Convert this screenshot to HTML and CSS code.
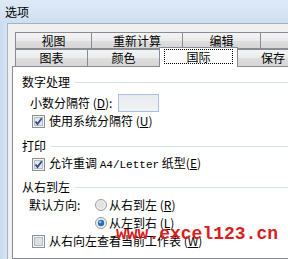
FILE: index.html
```html
<!DOCTYPE html>
<html>
<head>
<meta charset="utf-8">
<link rel="stylesheet" href="styles.css">
</head>
<body>
<div class="window">
  <div class="titlebar"><span class="title">选项</span></div>
  <div class="client">
    <div class="tabs">
      <div class="tabrow row1">
        <div class="tab w77">视图</div>
        <div class="tab w92">重新计算</div>
        <div class="tab w79">编辑</div>
        <div class="tab w80">常规</div>
      </div>
      <div class="tabrow row2">
        <div class="tab w73">图表</div>
        <div class="tab w73">颜色</div>
        <div class="tab selected w79"><span class="focus">国际</span></div>
        <div class="tab w72">保存</div>
      </div>
    </div>
    <div class="panel">
      <div class="head h1"><span>数字处理</span></div>
      <div class="row decimal">
        <span class="lbl">小数分隔符 (<u>D</u>):</span>
        <span class="input"></span>
      </div>
      <div class="row check r-sys">
        <svg class="cb" width="13" height="13" viewBox="0 0 13 13"><rect x="0.5" y="0.5" width="12" height="12" fill="#f4f4f4" stroke="#8e8f8f"/><rect x="2.5" y="2.5" width="8" height="8" fill="#e4e8ee" stroke="#b4bac2"/><path d="M3.5 6.5 L5.5 9 L9.8 3.2" fill="none" stroke="#2d4a8a" stroke-width="1.8"/></svg>
        <span>使用系统分隔符 (<u>U</u>)</span>
      </div>
      <div class="head h2"><span>打印</span></div>
      <div class="row check r-print">
        <svg class="cb" width="13" height="13" viewBox="0 0 13 13"><rect x="0.5" y="0.5" width="12" height="12" fill="#f4f4f4" stroke="#8e8f8f"/><rect x="2.5" y="2.5" width="8" height="8" fill="#e4e8ee" stroke="#b4bac2"/><path d="M3.5 6.5 L5.5 9 L9.8 3.2" fill="none" stroke="#2d4a8a" stroke-width="1.8"/></svg>
        <span>允许重调 <span class="mono">A4/Letter</span> 纸型(<u>E</u>)</span>
      </div>
      <div class="head h3"><span>从右到左</span></div>
      <div class="row dir">
        <span class="dirlbl">默认方向:</span>
        <svg class="rd" width="12" height="12" viewBox="0 0 12 12"><circle cx="6" cy="6" r="5.5" fill="#eeeeee" stroke="#9a9a9a"/><circle cx="6" cy="6" r="3.5" fill="#e2e2e2"/></svg>
        <span>从右到左 (<u>R</u>)</span>
      </div>
      <div class="row radio2">
        <svg class="rd" width="12" height="12" viewBox="0 0 12 12"><circle cx="6" cy="6" r="5.5" fill="#eeeeee" stroke="#9a9a9a"/><circle cx="6" cy="6" r="3.2" fill="#2a6fb5"/><circle cx="5.2" cy="5" r="1.3" fill="#8ec1ee"/></svg>
        <span>从左到右 (<u>L</u>)</span>
      </div>
      <div class="row check r-rtl">
        <svg class="cb" width="13" height="13" viewBox="0 0 13 13"><rect x="0.5" y="0.5" width="12" height="12" fill="#f4f4f4" stroke="#8e8f8f"/><rect x="2.5" y="2.5" width="8" height="8" fill="#dcdfe3" stroke="#b4bac2"/></svg>
        <span>从右向左查看当前工作表 (<u>W</u>)</span>
      </div>
    </div>
  </div>
</div>
<div class="watermark">www.excel123.cn</div>
</body>
</html>
```
FILE: styles.css
```css
html, body {
  margin: 0;
  padding: 0;
  width: 288px;
  height: 259px;
  overflow: hidden;
}
body {
  position: relative;
  background: linear-gradient(90deg, #c9daee 0px, #d7e4f3 7px);
  font-family: "Noto Sans CJK SC", "Noto Sans", sans-serif;
  font-size: 12px;
  color: #000;
}
.window {
  width: 420px;
  height: 259px;
  display: flex;
  flex-direction: column;
}
.titlebar {
  height: 23px;
  padding-left: 5px;
  display: flex;
  align-items: center;
  background: linear-gradient(#dfe9f6, #cfdff1);
}
.title {
  font-size: 12px;
  line-height: 14px;
  margin-top: 1px;
}
.client {
  flex: 1;
  margin-left: 7px;
  border-left: 1px solid #a6b2c2;
  border-top: 1px solid #a6b2c2;
  background: #f0f0f0;
  padding: 8px 0 0 4px;
  display: flex;
  flex-direction: column;
}
.tabs {
  padding-left: 3px;
  display: flex;
  flex-direction: column;
}
.tabrow {
  display: flex;
  height: 17px;
}
.row2 {
  position: relative;
  z-index: 2;
}
.tab {
  box-sizing: border-box;
  height: 17px;
  border: 1px solid #898c95;
  margin-left: -1px;
  background: linear-gradient(#f4f4f4, #ebebeb 50%, #dedede 51%, #d6d6d6);
  display: flex;
  align-items: center;
  justify-content: center;
  line-height: 14px;
}
.tab:first-child { margin-left: 0; }
.row2 .tab { border-bottom: none; }
.w72 { width: 72px; }
.w73 { width: 73px; }
.w77 { width: 77px; }
.w79 { width: 79px; }
.w80 { width: 80px; }
.w92 { width: 92px; }
.tab.selected {
  background: #ffffff;
  height: 20px;
  margin-top: -2px;
  align-items: flex-start;
  padding: 1px 4px 0;
}
.focus {
  flex: 1;
  box-sizing: border-box;
  height: 15px;
  border: 1px dotted #000;
  text-align: center;
  line-height: 13px;
}
.panel {
  flex: 1;
  border: 1px solid #898c95;
  background: #ffffff;
  padding-left: 9px;
  display: flex;
  flex-direction: column;
}
.head {
  height: 16px;
  display: flex;
  align-items: center;
  line-height: 14px;
}
.head::after {
  content: "";
  flex: 1;
  height: 1px;
  background: #d5dfe5;
  margin-left: 5px;
}
.h1 { margin-top: 7px; }
.h2 { margin-top: 9px; }
.h3 { margin-top: 7px; }
.row {
  display: flex;
  align-items: center;
  line-height: 14px;
}
u { text-decoration: underline; text-underline-offset: 1px; }
.decimal {
  height: 20px;
  margin-top: 3px;
  padding-left: 8px;
}
.lbl { width: 88px; }
.input {
  box-sizing: border-box;
  width: 41px;
  height: 18px;
  border: 1px solid #a9c1de;
  background: linear-gradient(#e9ecef, #f1f2f4);
}
.check {
  height: 16px;
  padding-left: 10px;
}
.cb { margin-right: 4px; flex: none; }
.r-sys { margin-top: 0; }
.r-print { margin-top: 2px; }
.r-rtl { margin-top: 2px; }
.mono {
  font-family: "Liberation Mono", monospace;
  font-size: 11px;
}
.dir {
  height: 16px;
  margin-top: 2px;
  padding-left: 7px;
}
.dirlbl { width: 66px; }
.rd { margin-right: 2px; flex: none; }
.radio2 {
  height: 16px;
  margin-top: 2px;
  padding-left: 73px;
}
.watermark {
  position: absolute;
  left: 116px;
  top: 225px;
  font-family: "Liberation Mono", monospace;
  font-weight: bold;
  font-size: 18px;
  line-height: 18px;
  color: #d81e1e;
  z-index: 5;
}
```
